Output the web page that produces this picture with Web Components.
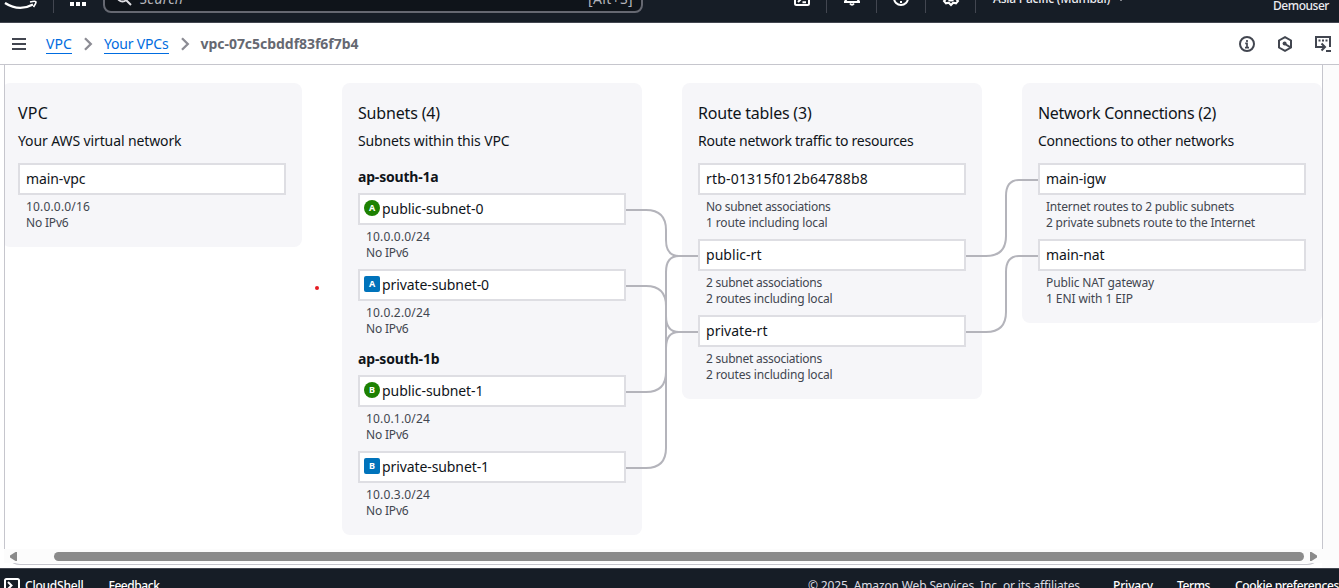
<!DOCTYPE html>
<html lang="en">
<head>
<meta charset="utf-8">
<title>VPC resource map</title>
<style>
html,body{margin:0;height:100%;overflow:hidden;background:#fff}
body{font:14px/20px "Noto Sans","Open Sans",sans-serif;color:#0f141a}
</style>
</head>
<body>
<console-page></console-page>
<script>
const define=(name,html,after)=>{
  const t=document.createElement('template');t.innerHTML=html;
  customElements.define(name,class extends HTMLElement{
    connectedCallback(){
      if(this.shadowRoot)return;
      this.attachShadow({mode:'open'}).append(t.content.cloneNode(true));
      if(after)after(this,this.shadowRoot);
    }
  });
};

/* Text set to a given measure: tracking is spread evenly over the characters. */
define('ui-text',`<style>:host{display:inline-block;white-space:nowrap}span{display:inline-block}</style><span></span>`,(el,root)=>{
  const s=root.querySelector('span');
  s.textContent=el.getAttribute('text');
  const w=+el.getAttribute('w');
  if(w){
    const d=(w-s.getBoundingClientRect().width)/s.textContent.length;
    s.style.letterSpacing=d.toFixed(3)+'px';
  }
});

/* Square icons share one 16-unit grid. */
const icons={
  menu:'<path d="M1 2h14M1 7h14M1 12h14"/>',
  shell:'<rect x="1" y="1" width="14" height="14" rx="1.5"/><path d="M4 4l3.5 3.5L4 11M9 11h4"/>',
  shellnav:'<rect x="1" y="1" width="14" height="14" rx="1.5"/><path d="M4 12l4-4M8.5 12.2h3.500M11 9v1"/>',
  bell:'<path d="M3.500 8V6a4.500 4.500 0 0 1 9 0v2l2.500 3.500v.5H1v-.5z"/><path d="M6 13.500q2 2.500 4 0"/>',
  help:'<circle cx="8" cy="8" r="7"/><path d="M8 11v2M6 6q0-2 2-2t2 2-2 3"/>',
  gear:'<path d="M6.500 1h3l.6 2 2.400-.4L14.500 5 13 7v2l2 2-2 2.300-2.800-.6L8 15l-2.200-2.300-2.800.6L1 11l2-2V7L1.500 5l2-2.400 2.400.4z"/><circle cx="8" cy="8" r="2.500"/>',
  info:'<circle cx="8" cy="8" r="7"/><path d="M8 4v2M6.200 7.300H8V12M6 11.600h4" stroke-width="1.700"/>',
  hex:'<path d="M8 1.100l6 3.400v7L8 14.900l-6-3.400v-7z"/><circle cx="7.600" cy="7.600" r="2" fill="currentColor" stroke="none"/><path d="M8 8l5.500 3.300"/>',
  session:'<path d="M4.500 11H1V1h14v10M1 11h8.500M6.500 7.500L10 11l-3.500 3.500M11 15h5"/><path d="M3.500 4.500h2M7 4.500h2M10.500 4.500h2" stroke-width="1.800"/>',
  chev:'<path d="M5 2.200l5.800 5.800L5 13.800" stroke-width="2.300"/>',
  search:'<circle cx="6.500" cy="6.500" r="5"/><path d="M10 10l5 5"/>',
  grid:'<path fill="currentColor" stroke="none" d="M0 0h4v4H0zM6 0h4v4H6zM12 0h4v4h-4zM0 6h4v4H0zM6 6h4v4H6zM12 6h4v4h-4zM0 12h4v4H0zM6 12h4v4H6zM12 12h4v4h-4z"/>'
};
define('ui-icon',`<style>:host{display:block;width:16px;height:16px;flex:none}svg{display:block;width:100%;height:100%;overflow:visible;fill:none;stroke:currentColor;stroke-width:2}</style><svg viewBox="0 0 16 16"></svg>`,(el,root)=>{
  root.querySelector('svg').innerHTML=icons[el.getAttribute('name')];
});

define('top-nav',`<style>
:host{display:block;height:22px;overflow:hidden;background:#161d26;border-bottom:1px solid #424650;color:#fff}
.bar{height:48px;margin-top:-26px;display:flex;align-items:center;font-size:12px}
.logo{width:33px;height:20px;margin:12px 0 0 4px}
i{width:1px;height:30px;background:#424650;flex:none}
.search{box-sizing:border-box;width:540px;height:32px;margin:-2px 0 0 17px;border:2px solid #656871;border-radius:8px;background:#0f141a;display:flex;align-items:center;padding:0 8px 0 11px;font-size:14px;color:#b4b4bb}
.search ui-icon{color:#dedee3;margin:2px 8px 0 0}
.search ui-text{margin-top:3px}
.search em{flex:1}
.act{display:flex;align-items:center;margin-left:151px}
.act ui-icon{margin:0 16px 0 17px}
.act ui-icon:first-child{margin-left:0}
.act ui-icon[name=help],.act ui-icon[name=gear]{margin:0 16px}
.act ui-icon[name=gear]{margin:0 16px 0 17px}
.reg{margin:1px 0 0 17px;display:flex;align-items:center;gap:7px;font-weight:500;color:#ebebf0}
.reg b{border:4px solid transparent;border-top-color:#ebebf0;border-bottom:0;margin-top:1px}
.user{margin:15px 10px 0 auto;font-weight:500;color:#ebebf0}
</style>
<div class="bar">
<svg class="logo" viewBox="0 0 33 20" fill="none" stroke="#fff"><path d="M1 9q14 9 28 1.500" stroke-width="2.400"/><path d="M26 8q6-1.500 6 0t-2.500 5" stroke-width="1.700"/></svg>
<i style="margin-left:16px"></i><ui-icon name="grid" style="margin:0 0 0 16px"></ui-icon>
<div class="search"><ui-icon name="search"></ui-icon><em><ui-text text="Search" w="43"></ui-text></em><ui-text text="[Alt+S]" w="45"></ui-text></div>
<div class="act"><ui-icon name="shellnav"></ui-icon><i></i><ui-icon name="bell"></ui-icon><i></i><ui-icon name="help"></ui-icon><i></i><ui-icon name="gear"></ui-icon><i></i></div>
<div class="reg"><ui-text text="Asia Pacific (Mumbai)" w="117"></ui-text><b></b></div>
<div class="user"><ui-text text="Demouser" w="56"></ui-text></div>
</div>`);

define('crumb-bar',`<style>
:host{display:flex;height:41px;align-items:center;border-bottom:1px solid #c6c6cd;background:#fff}
nav{display:flex;align-items:center}
.menu{color:#424650;margin:2px 19px 0 11px}
a{color:#006ce0;border-bottom:1px solid #006ce0;line-height:18px;margin-top:1px}
.chev{color:#8c8c94;margin:0 8px}
strong{color:#656871}
.tools{margin-left:auto;display:flex;gap:22px;padding-right:8px;color:#424650}
</style>
<nav><ui-icon class="menu" name="menu"></ui-icon>
<a><ui-text text="VPC" w="26"></ui-text></a><ui-icon class="chev" name="chev"></ui-icon>
<a><ui-text text="Your VPCs" w="64.500"></ui-text></a><ui-icon class="chev" name="chev"></ui-icon>
<strong><ui-text text="vpc-07c5cbddf83f6f7b4" w="158"></ui-text></strong></nav>
<div class="tools"><ui-icon name="info"></ui-icon><ui-icon name="hex"></ui-icon><ui-icon name="session"></ui-icon></div>`);

define('map-column',`<style>
:host{display:block;box-sizing:border-box;width:300px;padding:19px 16px 16px;background:#f6f6f9;border-radius:8px;flex:none}
h2{font:400 16px/22px "Noto Sans",sans-serif;margin:0 0 7px}
p{margin:0 0 12px}
.items{display:flex;flex-direction:column;gap:8px}
</style><h2></h2><p></p><div class="items"><slot></slot></div>`,(el,root)=>{
  root.querySelector('h2').innerHTML=`<ui-text text="${el.getAttribute('label')}" w="${el.getAttribute('lw')}"></ui-text>`;
  root.querySelector('p').innerHTML=`<ui-text text="${el.getAttribute('note')}" w="${el.getAttribute('nw')}"></ui-text>`;
});

define('zone-title',`<style>:host{display:block;font-weight:700;line-height:20px;margin:4px 0 -2px}</style><slot></slot>`);

define('map-node',`<style>
:host{display:block}
.box{box-sizing:border-box;width:268px;height:32px;border:2px solid #dedee3;background:#fff;display:flex;align-items:center;padding-left:6px}
.badge{width:16px;height:16px;margin:-2px 2px 0 -2px;background:#0073bb;border-radius:2px;color:#fff;font:700 9px/16px "Noto Sans",sans-serif;text-align:center}
.badge.pub{background:#1d8102;border-radius:50%}
.sub{padding:4px 0 0 8px;font-size:12px;line-height:16px;color:#424650}
.sub div{height:16px}
</style><div class="box"></div><div class="sub"></div>`,(el,root)=>{
  const z=el.getAttribute('zone');
  root.querySelector('.box').innerHTML=(z?`<span class="badge ${el.hasAttribute('public')?'pub':''}">${z}</span>`:'')+
    `<ui-text text="${el.getAttribute('name')}" w="${el.getAttribute('w')}"></ui-text>`;
  root.querySelector('.sub').innerHTML=['a','b'].map(k=>`<div><ui-text text="${el.getAttribute(k)}" w="${el.getAttribute(k+'w')}"></ui-text></div>`).join('');
});

/* Connector canvas, laid over the columns; coordinates are relative to the first column. */
define('map-links',`<style>:host{position:absolute;inset:0;pointer-events:none}svg{display:block;width:1320px;height:452px;fill:none;stroke:#b4b4bb;stroke-width:2}</style><svg></svg>`,(el,root)=>{
  const links=[[624,127,696,173],[624,309,696,173],[624,203,696,249],[624,385,696,249],[964,173,1036,97],[964,249,1036,173]];
  root.querySelector('svg').innerHTML=links.map(([x,y,X,Y])=>{
    const s=Y>y?1:-1,m=x+40;
    return `<path d="M${x} ${y}H${m-20}Q${m} ${y} ${m} ${y+20*s}V${Y-16*s}Q${m} ${Y} ${m+13} ${Y}H${X}"/>`;
  }).join('');
});

define('resource-map',`<style>
:host{display:flex;flex-direction:column;box-sizing:border-box;height:500px;margin:0 16px 0 4px;border:solid #c6c6cd;border-width:0 1px 1px;border-radius:0 0 16px 16px;background:#fff}
.view{height:484px;overflow:hidden;position:relative}
.cols{display:flex;gap:40px;align-items:flex-start;margin:18px 0 0 -3px;width:1320px;position:relative}
.dot{position:absolute;left:309.500px;top:221px;width:4px;height:4px;border-radius:50%;background:#e51c23}
.scroll{height:14px;display:flex;align-items:center;background:#fcfcfc;margin:0 -1px;padding:0 4px 0 5px}
.thumb{height:9px;width:1250px;margin:0 6px 0 37px;border-radius:5px;background:#8b8b8b}
svg{width:7px;height:9px;fill:#8b8b8b;flex:none}
svg:first-child{margin-left:1px}
</style>
<div class="view"><div class="cols">
<map-column label="VPC" lw="30" note="Your AWS virtual network" nw="163.500">
<map-node name="main-vpc" w="59.500" a="10.0.0.0/16" aw="64" b="No IPv6" bw="42.500"></map-node></map-column>
<map-column label="Subnets (4)" lw="82" note="Subnets within this VPC" nw="151.500">
<zone-title><ui-text text="ap-south-1a" w="80.500"></ui-text></zone-title>
<map-node zone="A" public name="public-subnet-0" w="101.500" a="10.0.0.0/24" aw="64" b="No IPv6" bw="42.500"></map-node>
<map-node zone="A" name="private-subnet-0" w="107" a="10.0.2.0/24" aw="64" b="No IPv6" bw="42.500"></map-node>
<zone-title><ui-text text="ap-south-1b" w="81.500"></ui-text></zone-title>
<map-node zone="B" public name="public-subnet-1" w="101.500" a="10.0.1.0/24" aw="64" b="No IPv6" bw="42.500"></map-node>
<map-node zone="B" name="private-subnet-1" w="107" a="10.0.3.0/24" aw="64" b="No IPv6" bw="42.500"></map-node></map-column>
<map-column label="Route tables (3)" lw="113.500" note="Route network traffic to resources" nw="215.500">
<map-node name="rtb-01315f012b64788b8" w="162" a="No subnet associations" aw="124.500" b="1 route including local" bw="121.500"></map-node>
<map-node name="public-rt" w="55.500" a="2 subnet associations" aw="116" b="2 routes including local" bw="126.500"></map-node>
<map-node name="private-rt" w="61.500" a="2 subnet associations" aw="116" b="2 routes including local" bw="126.500"></map-node></map-column>
<map-column label="Network Connections (2)" lw="178" note="Connections to other networks" nw="196">
<map-node name="main-igw" w="60" a="Internet routes to 2 public subnets" aw="188" b="2 private subnets route to the Internet" bw="209"></map-node>
<map-node name="main-nat" w="58.500" a="Public NAT gateway" aw="108" b="1 ENI with 1 EIP" bw="87"></map-node></map-column>
<map-links></map-links>
</div><span class="dot"></span></div>
<div class="scroll"><svg viewBox="0 0 7 9"><path d="M7 0v9L5.500 9 0 5.500v-2L5.500 0z"/></svg><div class="thumb"></div><svg viewBox="0 0 7 9"><path d="M0 0v9L1.500 9 7 5.500v-2L1.500 0z"/></svg></div>`);

define('console-footer',`<style>
:host{display:flex;box-sizing:border-box;height:20px;overflow:hidden;background:#161d26;border-top:1px solid #424650;color:#fff;font-size:12px;font-weight:500;align-items:flex-start}
ui-text{margin-top:7px;flex:none}
ui-icon{margin:9px 5px 0 4px}
.copy{color:#dedee3;font-weight:400;margin-left:auto}
</style>
<ui-icon name="shell"></ui-icon><ui-text text="CloudShell" w="58.500"></ui-text><ui-text text="Feedback" w="51" style="margin-left:25px"></ui-text>
<ui-text class="copy" text="© 2025, Amazon Web Services, Inc. or its affiliates." w="275"></ui-text>
<ui-text text="Privacy" w="40" style="margin-left:30px"></ui-text><ui-text text="Terms" w="33" style="margin-left:24px"></ui-text><ui-text text="Cookie preferences" w="104" style="margin-left:25px"></ui-text>`);

define('console-page',`<style>:host{display:flex;flex-direction:column;height:588px;width:1339px;overflow:hidden;background:linear-gradient(to right,#fff 1322px,#fcfcfc 1322px)}console-footer{margin-top:3px}</style>
<top-nav></top-nav><crumb-bar></crumb-bar><resource-map></resource-map><console-footer></console-footer>`);
</script>
</body>
</html>
